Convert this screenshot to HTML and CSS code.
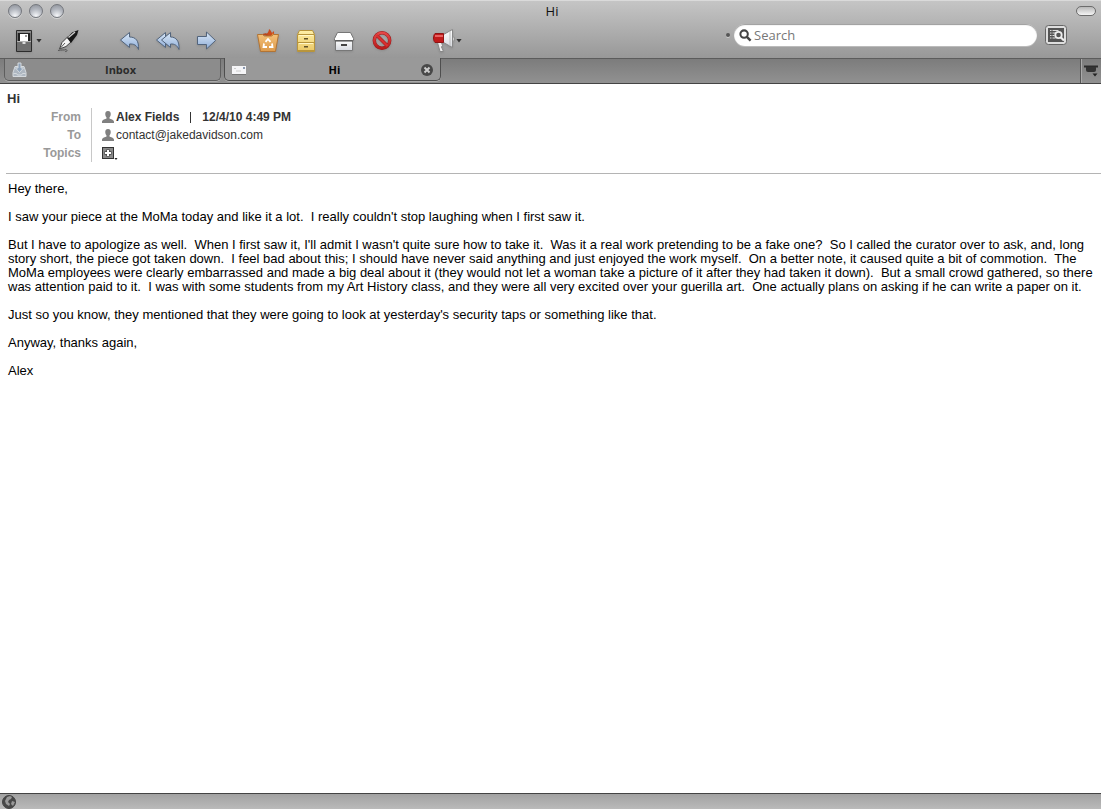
FILE: index.html
```html
<!DOCTYPE html>
<html lang="en">
<head>
<meta charset="utf-8">
<title>Hi</title>
<link rel="stylesheet" href="styles.css">
</head>
<body>
<svg class="defs" aria-hidden="true">
  <defs>
    <linearGradient id="blue" x1="0" y1="0" x2="0" y2="1"><stop offset="0" stop-color="#dbe9f8"/><stop offset="1" stop-color="#8fadd8"/></linearGradient>
    <linearGradient id="orange" x1="0" y1="0" x2="0" y2="1"><stop offset="0" stop-color="#f3c078"/><stop offset="1" stop-color="#dc9a4c"/></linearGradient>
    <linearGradient id="yellow" x1="0" y1="0" x2="0" y2="1"><stop offset="0" stop-color="#fff0a8"/><stop offset="1" stop-color="#eac765"/></linearGradient>
    <linearGradient id="white" x1="0" y1="0" x2="0" y2="1"><stop offset="0" stop-color="#ffffff"/><stop offset="1" stop-color="#d6d9df"/></linearGradient>
    <linearGradient id="red" x1="0" y1="0" x2="0" y2="1"><stop offset="0" stop-color="#e54848"/><stop offset="1" stop-color="#b81c1c"/></linearGradient>
    <path id="person" d="M6 0C3.900 0 3 1.600 3.300 3.700C3.500 5.100 4.200 6 4.500 6.500V7.600C3.500 8.500 0 8.500 0 11V12H12V11C12 8.500 8.500 8.500 7.500 7.600V6.500C7.800 6 8.500 5.100 8.700 3.700C9 1.600 8.100 0 6 0Z"/>
  </defs>
</svg>
<div class="window">
  <header class="chrome">
    <div class="titlebar">
      <div class="lights">
        <button class="light" aria-label="Close"></button>
        <button class="light" aria-label="Minimize"></button>
        <button class="light" aria-label="Zoom"></button>
      </div>
      <h1 class="title">Hi</h1>
      <button class="pill" aria-label="Toggle toolbar"></button>
    </div>
    <div class="toolbar">
      <div class="tools">
        <div class="group">
          <div class="split">
            <button class="tool" aria-label="Get mail"><svg viewBox="0 0 24 24"><path d="M4.500 1.500h15v21h-15z" fill="#707070" stroke="#2c2c2c"/><path d="M5 2h14v2H5z" fill="#8a8a8a"/><path d="M6 4h12v8H6z" fill="#222"/><path d="M8 5h8v7H8z" fill="#fff"/><path d="M13 6h2v2h-2z" fill="#999"/><path d="M5 12.500h14" stroke="#b5b5b5"/><path d="M10.500 13h3v2h-3z" fill="#ddd"/></svg></button>
            <button class="arrow" aria-label="Get mail options"></button>
          </div>
          <button class="tool" aria-label="Write"><svg viewBox="0 0 24 24"><path d="M3.500 20L6 13.500L12 7.500L15.500 12.500L10 17.500Z" fill="#f4f4f4" stroke="#444"/><path d="M11 9L16 3.500L22.500 1L21 6L15 14Z" fill="#161616"/><path d="M12.500 8.500L19 3" stroke="#ccc" stroke-width="1.400"/><path d="M3.500 20L9 14" stroke="#555"/><path d="M2 21.500c3-1 6 0 8-1c2 1 1 2-1 2" fill="none" stroke="#555"/></svg></button>
        </div>
        <div class="group">
          <button class="tool" aria-label="Reply"><svg viewBox="0 0 24 24"><path d="M2.500 11L11.500 3.500V8C18 8 21 12 20.500 20.500C18.500 16 16 14.800 11.500 15V18.500Z" fill="url(#blue)" stroke="#52647c"/></svg></button>
          <button class="tool" aria-label="Reply all"><svg viewBox="0 0 24 24"><path d="M.5 11L9.500 3.500V8L13 5V17L9.500 14.500V18.500Z" fill="url(#blue)" stroke="#52647c"/><path d="M5.500 11L14.500 3.500V8C20 8 23.700 12 23 20.500C21 16 18.500 14.800 14.500 15V18.500Z" fill="url(#blue)" stroke="#52647c"/></svg></button>
          <button class="tool" aria-label="Forward"><svg viewBox="0 0 24 24"><path d="M3.500 7.500H12.500V3L21.500 11.500L12.500 20V15.500H3.500Z" fill="url(#blue)" stroke="#52647c"/></svg></button>
        </div>
        <div class="group">
          <button class="tool" aria-label="Junk"><svg viewBox="0 0 24 24"><path d="M10 7c0-3 3-3 3-7c2 1 2 3 3 4l2-2v5z" fill="#c94b1d"/><path d="M6 6c1-2 3-1 4-2l3 3z" fill="#b5461d"/><path d="M15 7l2-3l1 3z" fill="#f3a040"/><path d="M1.500 5.500h5l2 1.500h7l2-1.500h5L19.500 22.500H4.500Z" fill="url(#orange)" stroke="#b27434"/><g fill="none" stroke="#fff" stroke-width="1.800"><path d="M9.500 12.800L12 10l2.500 2.800"/><path d="M16 14.500l.5 3.500H13"/><path d="M8 14.500l-.5 3.500H11"/></g></svg></button>
          <button class="tool" aria-label="File"><svg viewBox="0 0 24 24"><path d="M5.500 1.500h13l2 4v17h-17v-17z" fill="url(#yellow)" stroke="#b8953c"/><path d="M4 5.500h16M4 13.500h16M4 21.500h16" stroke="#b8953c"/><path d="M5 6.500h14M5 14.500h14" stroke="#fff7c8"/><path d="M10 9h4v1.500h-4zM10 17h4v1.500h-4z" fill="#5f5027"/></svg></button>
          <button class="tool" aria-label="Archive"><svg viewBox="0 0 24 24"><path d="M3.500 11h17v10.500h-17z" fill="url(#white)" stroke="#777"/><path d="M5.500 3.500h13l3 6v2h-19v-2z" fill="#fff" stroke="#777"/><path d="M3.500 12h17" stroke="#444"/><path d="M9 15h6v2H9z" fill="#444"/></svg></button>
          <button class="tool" aria-label="Delete"><svg viewBox="0 0 24 24"><circle cx="12" cy="11.500" r="7.700" fill="none" stroke="#9d1c1c" stroke-width="3.400"/><path d="M6.500 6l11 11" stroke="#9d1c1c" stroke-width="3.400"/><circle cx="12" cy="11.500" r="7.700" fill="none" stroke="url(#red)" stroke-width="2.400"/><path d="M6.500 6l11 11" stroke="#d93030" stroke-width="2.400"/></svg></button>
        </div>
        <div class="group">
          <div class="split">
            <button class="tool" aria-label="Alert"><svg viewBox="0 0 24 24"><path d="M5.500 13.500h4l1 3l-1 1.500l2 4.500H8z" fill="#eee" stroke="#888"/><path d="M20 7c3 0 3 6 0 6z" fill="#eee" stroke="#888"/><path d="M11.500 5.500L20.500.5V18.500L11.500 13.500Z" fill="url(#white)" stroke="#888"/><path d="M18 2v15" stroke="#bbb"/><path d="M3 4.500h8.500v9H3c-2-2-2-7 0-9z" fill="#c11a1a" stroke="#8e1515"/><path d="M3 6h8v2H3z" fill="#e76161"/></svg></button>
            <button class="arrow" aria-label="Alert options"></button>
          </div>
        </div>
      </div>
      <div class="find">
        <span class="grip"></span>
        <label class="search">
          <svg viewBox="0 0 14 14" aria-hidden="true"><circle cx="5.500" cy="5.500" r="4" fill="none" stroke="#444" stroke-width="2.200"/><path d="M8.500 8.500l4 4" stroke="#444" stroke-width="2.600"/></svg>
          <input type="search" placeholder="Search" aria-label="Search">
        </label>
        <button class="lookup" aria-label="Search messages"><svg viewBox="0 0 22 22"><rect x=".5" y="1.500" width="21" height="19" rx="3" fill="#dedede" stroke="#666"/><path d="M3 4h16v14H3z" fill="#555"/><path d="M5 6.500h1.500M7.500 6.500h6M5 9h1.500M7.500 9h3M5 11.500h1.500M7.500 11.500h2M5 14h1.500M7.500 14h3" stroke="#ddd"/><circle cx="13.500" cy="11" r="3.200" fill="#555" stroke="#eee" stroke-width="1.800"/><path d="M15.500 13l3.500 3.500" stroke="#eee" stroke-width="2.200"/></svg></button>
      </div>
    </div>
  </header>
  <nav class="tabs" aria-label="Open tabs">
    <div class="tab">
      <svg class="tabicon" viewBox="0 0 16 16" aria-hidden="true"><path d="M3 4.500h9l2 6v4h-13v-4z" fill="#aeb7c1" stroke="#d5dade"/><path d="M6 1h3v5h2.500L7.500 10.500L3.500 6h2.500z" fill="#8da2ba" stroke="#d5dade"/><path d="M1.500 11.500h3l1 1.500h4l1-1.500h3" fill="none" stroke="#d5dade"/></svg>
      <button class="tabname">Inbox</button>
    </div>
    <div class="tab active">
      <svg class="tabicon" viewBox="0 0 16 16" aria-hidden="true"><path d="M0 4h14v8H0z" fill="#f5f5f7"/><path d="M0 12.500h14" stroke="#777"/><path d="M2 6.500h2M4 9h5" stroke="#ccc"/><path d="M11 5h2v2h-2z" fill="#8b99b0"/></svg>
      <button class="tabname">Hi</button>
      <button class="tabend" aria-label="Close tab"><svg viewBox="0 0 12 12"><circle cx="6" cy="6" r="6" fill="#484848"/><path d="M3.500 3.500l5 5M8.500 3.500l-5 5" stroke="#ccc" stroke-width="2"/></svg></button>
    </div>
    <button class="alltabs" aria-label="List all tabs"><svg viewBox="0 0 16 14"><path d="M1 2.500h14" stroke="#2c2c2c" stroke-width="2"/><path d="M3 3h10v3q0 2-2 2H5q-2 0-2-2z" fill="#333"/><path d="M9.500 9.500h5L12 12.500z" fill="#222"/></svg></button>
  </nav>
  <main class="message">
    <section class="details">
      <h2 class="subject">Hi</h2>
      <dl class="fields">
        <dt>From</dt>
        <dd><svg class="person" viewBox="0 0 12 12" aria-hidden="true"><use href="#person"/></svg><b>Alex Fields</b><span class="bar"></span><b>12/4/10 4:49 PM</b></dd>
        <dt>To</dt>
        <dd><svg class="person" viewBox="0 0 12 12" aria-hidden="true"><use href="#person"/></svg><span>contact@jakedavidson.com</span></dd>
        <dt>Topics</dt>
        <dd><button class="add" aria-label="Add topic"><svg viewBox="0 0 16 14"><rect x=".5" y="1.500" width="11" height="11" fill="#8a8a8a" stroke="#333"/><path d="M6 3.500v7M2.500 7h7" stroke="#444" stroke-width="3.400"/><path d="M6 4v6M3 7h6" stroke="#fff" stroke-width="2"/><path d="M12.500 12h3l-1.500 2z" fill="#222"/></svg></button></dd>
      </dl>
    </section>
    <article class="body">
      <p>Hey there,</p>
      <p>I saw your piece at the MoMa today and like it a lot.  I really couldn't stop laughing when I first saw it.</p>
      <p>But I have to apologize as well.  When I first saw it, I'll admit I wasn't quite sure how to take it.  Was it a real work pretending to be a fake one?  So I called the curator over to ask, and, long story short, the piece got taken down.  I feel bad about this; I should have never said anything and just enjoyed the work myself.  On a better note, it caused quite a bit of commotion.  The MoMa employees were clearly embarrassed and made a big deal about it (they would not let a woman take a picture of it after they had taken it down).  But a small crowd gathered, so there was attention paid to it.  I was with some students from my Art History class, and they were all very excited over your guerilla art.  One actually plans on asking if he can write a paper on it.</p>
      <p>Just so you know, they mentioned that they were going to look at yesterday's security taps or something like that.</p>
      <p>Anyway, thanks again,</p>
      <p>Alex</p>
    </article>
  </main>
  <footer class="status">
    <svg viewBox="0 0 14 14" aria-hidden="true"><circle cx="7" cy="7" r="6.500" fill="#484848" stroke="#444"/><path d="M5 2l3-1l2 1L9 4L7 5L6 7L8 9L7 11L4 9L3 6zM10 6l3 1l-2 4l-2-2z" fill="#999"/></svg>
  </footer>
</div>
</body>
</html>
```

FILE: styles.css
```css
* { box-sizing: border-box; }
body {
  margin: 0;
  font-family: "Liberation Sans", Arial, sans-serif;
  font-size: 13px;
  color: #000;
  background: #fff;
}
button {
  padding: 0;
  border: 0;
  background: none;
  font: inherit;
  color: inherit;
}
svg { display: block; }
.defs { position: absolute; width: 0; height: 0; }
.window { display: flex; flex-direction: column; min-height: 100vh; }

.chrome {
  border-top: 1px solid #dadada;
  background: linear-gradient(#c5c5c5, #989898);
}
.titlebar {
  display: grid;
  grid-template-columns: 1fr auto 1fr;
  align-items: center;
  height: 20px;
  padding: 0 5px 0 8px;
}
.lights { display: flex; gap: 7px; }
.light {
  width: 14px;
  height: 14px;
  border: 1px solid #74777d;
  border-radius: 50%;
  background: radial-gradient(circle at 50% 90%, #f0f2f5 5%, #b2b6be 55%, #8b8f97 100%);
  box-shadow: 0 1px 0 #d5d5d5;
}
.title {
  margin: 0;
  font: 13px/20px "Open Sans", sans-serif;
  color: #111;
}
.pill {
  justify-self: end;
  width: 20px;
  height: 10px;
  border: 1px solid #6c6c6c;
  border-radius: 5px;
  background: linear-gradient(#b8b8b8, #f4f4f4);
}
.toolbar {
  display: flex;
  justify-content: space-between;
  height: 37px;
  padding: 0 34px 0 12px;
}
.tools { display: flex; align-items: center; gap: 38px; padding-top: 2px; }
.group { display: flex; gap: 14px; }
.split { display: flex; align-items: center; }
.tool, .tool svg { width: 24px; height: 24px; }
.tool { filter: drop-shadow(0 1px 1px #7777); }
.arrow {
  width: 6px;
  height: 4px;
  background: #333;
  clip-path: polygon(0 0, 100% 0, 50% 100%);
}
.find { display: flex; align-items: center; padding-bottom: 9px; }
.grip {
  width: 4px;
  height: 4px;
  margin-right: 4px;
  border-radius: 50%;
  background: #555;
  box-shadow: 0 1px 0 #ccc;
}
.search {
  display: flex;
  align-items: center;
  gap: 2px;
  width: 303px;
  height: 22px;
  padding: 0 5px;
  border-radius: 11px;
  background: #fff;
  box-shadow: inset 0 1px 1px #999, 0 1px 0 #bbb;
}
.search svg { width: 13px; height: 13px; }
.search input {
  flex: 1;
  min-width: 0;
  padding: 0;
  border: 0;
  outline: 0;
  background: none;
  font: 13px/20px "Open Sans", sans-serif;
}
.search input::placeholder { color: #777; opacity: 1; }
.lookup { margin-left: 8px; }
.lookup svg { width: 22px; height: 22px; }

.tabs {
  display: flex;
  align-items: flex-start;
  gap: 3px;
  height: 26px;
  padding-left: 4px;
  border-top: 1px solid #5c5c5c;
  border-bottom: 1px solid #444;
  background: linear-gradient(#7c7c7c, #919191);
}
.tab {
  display: flex;
  align-items: center;
  width: 217px;
  height: 22px;
  padding: 0 7px;
  border: 1px solid #5e5e5e;
  border-top: 0;
  border-radius: 0 0 5px 5px;
  background: #8c8c8c;
  box-shadow: 0 1px 0 #aaa;
}
.tab.active {
  height: 23px;
  margin-top: -1px;
  padding-top: 1px;
  background: #999;
  border-color: #4e4e4e;
}
.tabicon { width: 16px; height: 16px; }
.tabname {
  flex: 1;
  font: bold 11px/20px "Open Sans", sans-serif;
  color: #2b2b2b;
}
.active .tabname { color: #000; }
.tabend, .tabend svg { width: 12px; height: 12px; }
.alltabs {
  align-self: stretch;
  margin-left: auto;
  padding: 0 2px;
  border-left: 1px solid #555;
  box-shadow: inset 1px 0 0 #aaa;
}
.alltabs svg { width: 16px; height: 14px; }

.message { flex: 1; }
.details {
  margin-left: 6px;
  padding: 8px 0 11px 1px;
  border-bottom: 1px solid #b4b4b4;
  font-size: 12px;
  line-height: 18px;
  color: #333;
}
.subject { margin: 0; font-size: 13px; line-height: 14px; }
.fields {
  display: grid;
  grid-template-columns: 85px 1fr;
  margin: 2px 0 0;
}
.fields dt {
  padding-right: 10px;
  border-right: 1px solid #c8c8c8;
  text-align: right;
  font-weight: bold;
  color: #999;
}
.fields dd { display: flex; align-items: center; margin: 0; padding-left: 10px; }
.person { width: 12px; height: 12px; margin-right: 2px; fill: #808080; }
.bar { width: 1px; height: 11px; margin: 0 11px; background: #333; }
.add svg { width: 16px; height: 14px; }
.body { padding: 8px 8px 0; line-height: 14px; }
.body p { margin: 0 0 14px; white-space: pre-wrap; }

.status {
  height: 16px;
  padding: 1px 2px;
  border-top: 1px solid #444;
  background: linear-gradient(#a2a2a2, #bababa);
}
.status svg { width: 14px; height: 14px; }
```
